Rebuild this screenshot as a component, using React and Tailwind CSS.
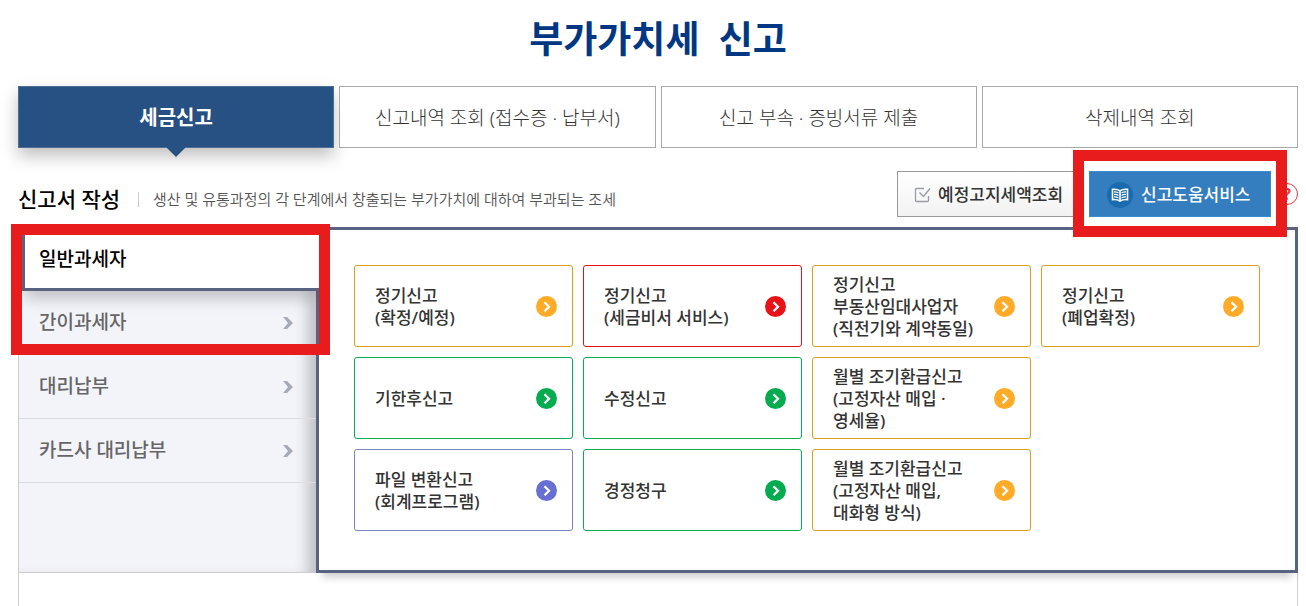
import clsx from 'clsx';

const tabs = ['세금신고', '신고내역 조회 (접수증 · 납부서)', '신고 부속 · 증빙서류 제출', '삭제내역 조회'];

const menus = ['일반과세자', '간이과세자', '대리납부', '카드사 대리납부'];

const cards = [
  { label: '정기신고\n(확정/예정)', tone: 'orange' },
  { label: '정기신고\n(세금비서 서비스)', tone: 'red' },
  { label: '정기신고\n부동산임대사업자\n(직전기와 계약동일)', tone: 'orange' },
  { label: '정기신고\n(폐업확정)', tone: 'orange' },
  { label: '기한후신고', tone: 'green' },
  { label: '수정신고', tone: 'green' },
  { label: '월별 조기환급신고\n(고정자산 매입 ·\n영세율)', tone: 'orange' },
  null,
  { label: '파일 변환신고\n(회계프로그램)', tone: 'purple' },
  { label: '경정청구', tone: 'green' },
  { label: '월별 조기환급신고\n(고정자산 매입,\n대화형 방식)', tone: 'orange' },
];

const tones = {
  orange: { border: 'border-[#d8a01d]', circle: 'text-[#ffab27]' },
  red: { border: 'border-[#e31219]', circle: 'text-[#e81217]' },
  green: { border: 'border-[#08ab53]', circle: 'text-[#04ac4f]' },
  purple: { border: 'border-[#7786bd]', circle: 'text-[#686fd2]' },
};

function CircleArrow({ className }) {
  return (
    <svg viewBox="0 0 21 21" className={clsx('h-[21px] w-[21px] shrink-0', className)} aria-hidden="true">
      <circle cx="10.5" cy="10.5" r="10.5" fill="currentColor" />
      <path d="M8.500 6.300l4.500 4.500-4.500 4.500" fill="none" stroke="#fff" strokeWidth="2.300" />
    </svg>
  );
}

function MenuArrow() {
  return (
    <svg viewBox="0 0 10 12" className="h-3 w-2.5 shrink-0" aria-hidden="true">
      <path d="M0 0h4l6 6-6 6H0l5-6z" fill="#a6abb8" />
    </svg>
  );
}

function CheckIcon() {
  return (
    <svg viewBox="0 0 17 16" className="h-4 w-[17px]" fill="none" stroke="#999da5" aria-hidden="true">
      <path d="M10 1.5H2.5a1 1 0 0 0-1 1v11a1 1 0 0 0 1 1h11a1 1 0 0 0 1-1V9" strokeWidth="1.3" />
      <path d="M5.5 5.5l4 4L16 1.5" strokeWidth="1.5" />
    </svg>
  );
}

function BookIcon() {
  return (
    <svg viewBox="0 0 26 26" className="h-[26px] w-[26px]" aria-hidden="true">
      <circle cx="13" cy="13" r="13" fill="#1a6aae" />
      <path
        d="M13 8.8C11 7.4 8.5 7 5.5 7.3V17.6C8.5 17.4 11 17.8 13 19C15 17.8 17.5 17.4 20.5 17.6V7.3C17.5 7 15 7.4 13 8.8V19"
        fill="none"
        stroke="#fff"
        strokeWidth="1.6"
      />
      <path
        d="M7 10q2.5-.2 4.500 1M7 12.500q2.500-.2 4.500 1M7 15q2.500-.2 4.500 1M19 10q-2.500-.2-4.500 1M19 12.500q-2.500-.2-4.500 1M19 15q-2.500-.2-4.500 1"
        fill="none"
        stroke="#fff"
        strokeWidth="1.2"
      />
    </svg>
  );
}

function Highlight({ className }) {
  return <div className={clsx('pointer-events-none absolute z-20 border-[11px] border-[#e81c1c]', className)} />;
}

export default function App() {
  return (
    <main className="min-h-screen overflow-hidden bg-white pr-2 pl-[18px] font-['Noto_Sans','Noto_Sans_CJK_KR',sans-serif] text-[#333]">
      <h1 className="pt-3 pb-5 text-center text-[37px] leading-[54px] font-bold text-[#003782]">부가가치세&nbsp; 신고</h1>

      {/* Tabs */}
      <nav className="grid grid-cols-4 gap-[5px]">
        {tabs.map((tab, i) => (
          <button
            key={tab}
            type="button"
            className={clsx(
              'relative h-[62px] border pt-0.5',
              i === 0
                ? 'border-[#4c6f98] bg-[#275182] text-[20px] font-bold text-white shadow-[0_8px_16px_rgba(0,0,0,0.25)]'
                : 'border-[#a9a9a9] bg-white text-[19px] font-light'
            )}
          >
            {tab}
            {i === 0 && (
              <svg viewBox="0 0 20 10" className="absolute top-full left-1/2 h-2.5 w-5 -translate-x-1/2" aria-hidden="true">
                <path d="M0 0h20L10 10z" fill="#275182" />
              </svg>
            )}
          </button>
        ))}
      </nav>

      {/* Section heading */}
      <div className="flex items-center pt-[23px] pb-2.5">
        <h2 className="pt-3 text-[21px] font-medium text-black">신고서 작성</h2>
        <span className="mt-2.5 ml-[18px] h-[15px] w-px bg-[#ccc]" />
        <p className="ml-3.5 pt-2.5 text-[15px] font-[350] text-[#555]">
          생산 및 유통과정의 각 단계에서 창출되는 부가가치에 대하여 부과되는 조세
        </p>
        <div className="ml-auto flex items-center gap-[5px]">
          <button
            type="button"
            className="flex h-[46px] w-[187px] items-center gap-[7px] border border-[#999] bg-linear-to-b from-white to-[#f2f2f2] pt-0.5 pl-4 text-[17px] font-medium whitespace-nowrap"
          >
            <CheckIcon />
            예정고지세액조회
          </button>
          <div className="relative">
            <button
              type="button"
              className="flex h-[46px] w-[182px] items-center gap-2 border border-[#3a8bd0] bg-[#347dbe] pt-0.5 pl-[17px] text-[17px] font-medium whitespace-nowrap text-white"
            >
              <BookIcon />
              신고도움서비스
            </button>
            <Highlight className="-inset-x-4 -top-[21px] -bottom-5" />
          </div>
          <button
            type="button"
            aria-label="도움말"
            className="flex h-[22px] w-[22px] items-center justify-center rounded-full border border-[#e8383d] text-[16px] leading-5 font-bold text-[#e8383d]"
          >
            ?
          </button>
        </div>
      </div>

      {/* Menu and report cards */}
      <section className="flex min-h-[379px] items-start border-x border-[#ccc]">
        <div className="relative flex w-full">
          <aside className="relative w-[297px] shrink-0 border-b border-[#ccc] bg-[#f3f4fa] shadow-[inset_-16px_0_14px_-8px_rgba(0,0,0,0.22)]">
            <ul>
              {menus.map((menu, i) => (
                <li key={menu}>
                  <button
                    type="button"
                    className={clsx(
                      'flex h-16 items-center justify-between pr-[23px] text-left text-[19px] font-medium',
                      i === 0
                        ? 'relative z-10 w-[300px] border-y-[3px] border-l-[6px] border-[#57637f] bg-white pl-3.5 text-black shadow-[0_14px_14px_-6px_rgba(0,0,0,0.2)]'
                        : 'w-full border-b border-[#ddd] pl-5 text-[#666]'
                    )}
                  >
                    {menu}
                    {i > 0 && <MenuArrow />}
                  </button>
                </li>
              ))}
            </ul>
            <Highlight className="top-[-3px] -right-3.5 -left-2 h-[131px]" />
          </aside>

          <div className="-mr-px grid flex-1 grid-cols-4 gap-2.5 border-[3px] border-[#57637f] bg-white px-[35px] pt-[35px] pb-[39px] shadow-[0_10px_8px_-6px_rgba(0,0,0,0.2)]">
            {cards.map((card, i) =>
              card ? (
                <a
                  key={i}
                  href="#"
                  className={clsx(
                    'flex h-[82px] items-center justify-between rounded-[3px] border pr-[15px] pl-5 text-[17px] leading-[22px] font-medium',
                    tones[card.tone].border
                  )}
                >
                  <span className="pt-0.5 whitespace-pre">{card.label}</span>
                  <CircleArrow className={tones[card.tone].circle} />
                </a>
              ) : (
                <div key={i} />
              )
            )}
          </div>
        </div>
      </section>
    </main>
  );
}
